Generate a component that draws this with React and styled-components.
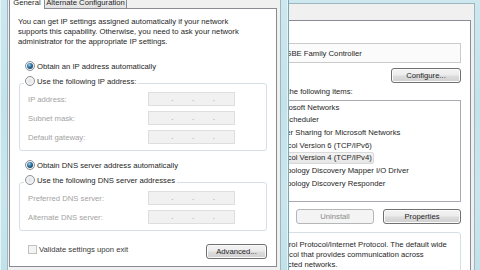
import React from "react";
import styled, { createGlobalStyle } from "styled-components";

const GlobalStyle = createGlobalStyle`
  html, body {
    margin: 0;
    padding: 0;
  }
  body {
    width: 480px;
    height: 270px;
    overflow: hidden;
    background: #c7e5ec;
    font-family: "Liberation Sans", Arial, sans-serif;
    font-size: 7.7px;
    color: #262626;
  }
`;

const Desktop = styled.div`
  position: relative;
  width: 480px;
  height: 270px;
  overflow: hidden;
`;

const Window = styled.div`
  position: absolute;
  left: ${p => p.$left}px;
  top: ${p => p.$top}px;
  width: 290px;
  height: 310px;
  z-index: ${p => p.$z};
  box-sizing: border-box;
  display: flex;
  padding: ${p => p.$frameTop}px 7px 7px;
  border: 1px solid #7fa5b0;
  background: linear-gradient(180deg, #cfe9f0 0%, #c2e2ea 40%, #c9e6ed 70%, #bfe0e8 100%);
  box-shadow: inset 0 0 0 1px #e3f3f7;
`;

const Client = styled.div`
  flex: 1;
  min-width: 0;
  display: flex;
  flex-direction: column;
  background: #f0f0f0;
  border: 1px solid #9fb6be;
  padding: ${p => p.$pad};
`;

const TabRow = styled.div`
  display: flex;
  align-items: flex-end;
  height: ${p => p.$h}px;
  margin-bottom: -1px;
  position: relative;
  z-index: 1;
`;

const Tab = styled.div`
  box-sizing: border-box;
  width: ${p => p.$w}px;
  height: ${p => (p.$active ? 15 : 13)}px;
  margin-left: ${p => (p.$first ? 0 : -1)}px;
  display: flex;
  align-items: center;
  justify-content: center;
  white-space: nowrap;
  border: 1px solid #898c95;
  border-bottom: ${p => (p.$active ? "none" : "1px solid #898c95")};
  border-radius: 2px 2px 0 0;
  background: ${p => (p.$active ? "#fff" : "linear-gradient(180deg, #f3f3f3, #e2e2e2)")};
  position: relative;
  z-index: ${p => (p.$active ? 2 : 1)};
`;

const TabPage = styled.div`
  box-sizing: border-box;
  height: ${p => p.$h}px;
  background: #fff;
  border: 1px solid #898c95;
  padding: ${p => p.$pad};
  display: flex;
  flex-direction: column;
`;

const Intro = styled.p`
  margin: 0;
  line-height: 10px;
  white-space: nowrap;
`;

const RadioRow = styled.label`
  display: flex;
  align-items: center;
  gap: 2px;
  height: 12px;
  margin-left: 7px;
  margin-top: ${p => p.$mt}px;
  white-space: nowrap;
`;

const Radio = styled.span`
  box-sizing: border-box;
  width: 10px;
  height: 10px;
  flex: none;
  border-radius: 50%;
  border: 1px solid #8b9095;
  background: radial-gradient(circle at 50% 50%, #e2e4e6 0%, #f5f6f7 75%);
  display: flex;
  align-items: center;
  justify-content: center;

  &::after {
    content: "";
    display: ${p => (p.$checked ? "block" : "none")};
    width: 6px;
    height: 6px;
    border-radius: 50%;
    background: radial-gradient(circle at 38% 32%, #9cd0ee 0%, #2b6d99 45%, #0e2f4a 100%);
  }
`;

const GroupBox = styled.div`
  display: flex;
  flex-direction: column;
  margin-top: ${p => p.$mt}px;
  margin-left: ${p => p.$ml || 0}px;
  border: 1px solid #d5dfe5;
  border-radius: 3px;
  padding: 0 8px ${p => p.$pb}px ${p => p.$pl || 8}px;
`;

const GroupHeader = styled.div`
  align-self: flex-start;
  display: flex;
  align-items: center;
  gap: 2px;
  height: ${p => p.$h || 12}px;
  margin: ${p => p.$margin};
  padding: 0 2px 0 1px;
  background: #fff;
  white-space: nowrap;
`;

const FieldRow = styled.div`
  display: flex;
  align-items: center;
  height: 14px;

  & + & {
    margin-top: 5px;
  }
`;

const FieldLabel = styled.span`
  width: 120px;
  color: #a2a2a2;
  white-space: nowrap;
`;

const IpBox = styled.div`
  box-sizing: border-box;
  width: 87px;
  height: 14px;
  display: flex;
  align-items: center;
  padding-left: 3px;
  border: 1px solid #dedede;
  background: #f1f1f1;
  color: #8c8c8c;
`;

const Octet = styled.span`
  width: 20px;
`;

const Dot = styled.span`
  width: 1px;
  display: flex;
  justify-content: center;
  line-height: 10px;
`;

const BottomRow = styled.div`
  display: flex;
  justify-content: space-between;
  align-items: flex-start;
  height: 15px;
  margin-top: 13px;
`;

const CheckLabel = styled.label`
  display: flex;
  align-items: center;
  gap: 2px;
  height: 10px;
  margin-left: 10px;
  white-space: nowrap;
  color: #3a3a3a;
`;

const CheckBox = styled.span`
  box-sizing: border-box;
  width: 9px;
  height: 9px;
  flex: none;
  border: 1px solid ${p => (p.$disabled ? "#c2c2c2" : "#8f8f8f")};
  background: ${p => (p.$disabled ? "#f4f4f4" : "linear-gradient(135deg, #dcdcdc, #fbfbfb)")};
  color: #2a4b8d;
  font-size: 7px;
  line-height: 7px;
  text-align: center;
`;

const Button = styled.button`
  box-sizing: border-box;
  width: ${p => p.$w}px;
  height: 15px;
  padding: 0;
  flex: none;
  font: inherit;
  color: ${p => (p.disabled ? "#8a8a8a" : "#262626")};
  border: 1px solid ${p => (p.disabled ? "#b3b7ba" : "#707070")};
  border-radius: 3px;
  background: ${p =>
    p.disabled
      ? "#f4f4f4"
      : "linear-gradient(180deg, #f3f3f3 0%, #ececec 48%, #dddddd 52%, #d0d0d0 100%)"};
  box-shadow: inset 0 0 0 1px ${p => (p.disabled ? "#f4f4f4" : "#fbfbfb")};
`;

const Label = styled.div`
  line-height: 10px;
  white-space: nowrap;
  margin-top: ${p => p.$mt || 0}px;
`;

const AdapterBox = styled.div`
  box-sizing: border-box;
  height: 20px;
  margin-top: 6px;
  display: flex;
  align-items: center;
  gap: 9px;
  padding-left: 4px;
  border: 1px solid #cbcbcb;
  background: #fbfbfb;
  white-space: nowrap;
`;

const RightAligned = styled.div`
  display: flex;
  justify-content: flex-end;
  margin-top: ${p => p.$mt}px;
  gap: 9px;
`;

const ListBox = styled.div`
  box-sizing: border-box;
  height: 102px;
  margin-top: 3px;
  border: 1px solid #a9abb0;
  background: #fff;
`;

const Item = styled.div`
  height: 12.67px;
  display: flex;
  align-items: center;
  gap: 3px;
  white-space: nowrap;
`;

const ItemText = styled.span`
  line-height: 10px;
  padding: 0 1px;
  margin-left: -1px;
  border: 1px solid ${p => (p.$selected ? "#d9d9d9" : "transparent")};
  border-radius: 2px;
  background: ${p => (p.$selected ? "linear-gradient(180deg, #f4f4f4, #e6e6e6)" : "transparent")};
`;

const Description = styled.p`
  margin: 0;
  line-height: 10px;
  white-space: nowrap;
`;

const NetIcon = () => (
  <svg width="11" height="11" viewBox="0 0 11 11">
    <rect x="1" y="2" width="9" height="6" fill="#6d9bc9" stroke="#2f5a86" strokeWidth="0.8" />
    <rect x="4" y="8" width="3" height="2" fill="#7a7a7a" />
  </svg>
);

const IpField = () => (
  <IpBox>
    <Octet />
    <Dot>.</Dot>
    <Octet />
    <Dot>.</Dot>
    <Octet />
    <Dot>.</Dot>
    <Octet />
  </IpBox>
);

const items = [
  "Client for Microsoft Networks",
  "QoS Packet Scheduler",
  "File and Printer Sharing for Microsoft Networks",
  "Internet Protocol Version 6 (TCP/IPv6)",
  "Internet Protocol Version 4 (TCP/IPv4)",
  "Link-Layer Topology Discovery Mapper I/O Driver",
  "Link-Layer Topology Discovery Responder"
];

const AdapterProperties = () => (
  <Window $left={193} $top={-20} $z={1} $frameTop={22}>
    <Client $pad="0 3px 0 4px">
      <TabRow $h={18}>
        <Tab $first $active $w={46}>Networking</Tab>
        <Tab $w={34}>Sharing</Tab>
      </TabRow>
      <TabPage $h={270} $pad="6px 9px 0 6px">
        <Label>Connect using:</Label>
        <AdapterBox>
          <NetIcon />
          <span>Realtek PCIe GBE Family Controller</span>
        </AdapterBox>
        <RightAligned $mt={5}>
          <Button $w={70}>Configure...</Button>
        </RightAligned>
        <Label $mt={4}>This connection uses the following items:</Label>
        <ListBox>
          {items.map((name, i) => (
            <Item key={name}>
              <CheckBox>✓</CheckBox>
              <NetIcon />
              <ItemText $selected={i === 4}>{name}</ItemText>
            </Item>
          ))}
        </ListBox>
        <RightAligned $mt={7}>
          <Button $w={78}>Install...</Button>
          <Button $w={78} disabled>Uninstall</Button>
          <Button $w={78}>Properties</Button>
        </RightAligned>
        <GroupBox $mt={8} $pb={8} $pl={11}>
          <GroupHeader $h={10} $margin="-6px 0 3px -6px">Description</GroupHeader>
          <Description>
            Transmission Control Protocol/Internet Protocol. The default wide
            <br />
            area network protocol that provides communication across
            <br />
            diverse interconnected networks.
          </Description>
        </GroupBox>
      </TabPage>
    </Client>
  </Window>
);

const Ipv4Properties = () => (
  <Window $left={-1} $top={-22} $z={2} $frameTop={7}>
    <Client $pad="7px 3px 0 1px">
      <TabRow $h={15}>
        <Tab $first $active $w={36}>General</Tab>
        <Tab $w={83}>Alternate Configuration</Tab>
      </TabRow>
      <TabPage $h={259} $pad="8px 9px 0 8px">
        <Intro>
          You can get IP settings assigned automatically if your network
          <br />
          supports this capability. Otherwise, you need to ask your network
          <br />
          administrator for the appropriate IP settings.
        </Intro>

        <RadioRow $mt={13}>
          <Radio $checked />
          Obtain an IP address automatically
        </RadioRow>

        <GroupBox $mt={11} $ml={1} $pb={6}>
          <GroupHeader $margin="-9px 0 5px -4px">
            <Radio />
            Use the following IP address:
          </GroupHeader>
          <FieldRow>
            <FieldLabel>IP address:</FieldLabel>
            <IpField />
          </FieldRow>
          <FieldRow>
            <FieldLabel>Subnet mask:</FieldLabel>
            <IpField />
          </FieldRow>
          <FieldRow>
            <FieldLabel>Default gateway:</FieldLabel>
            <IpField />
          </FieldRow>
        </GroupBox>

        <RadioRow $mt={8}>
          <Radio $checked />
          Obtain DNS server address automatically
        </RadioRow>

        <GroupBox $mt={11} $ml={1} $pb={6}>
          <GroupHeader $margin="-9px 0 5px -4px">
            <Radio />
            Use the following DNS server addresses
          </GroupHeader>
          <FieldRow>
            <FieldLabel>Preferred DNS server:</FieldLabel>
            <IpField />
          </FieldRow>
          <FieldRow>
            <FieldLabel>Alternate DNS server:</FieldLabel>
            <IpField />
          </FieldRow>
        </GroupBox>

        <BottomRow>
          <CheckLabel>
            <CheckBox $disabled />
            Validate settings upon exit
          </CheckLabel>
          <Button $w={61}>Advanced...</Button>
        </BottomRow>
      </TabPage>
    </Client>
  </Window>
);

export default function App() {
  return (
    <Desktop>
      <GlobalStyle />
      <AdapterProperties />
      <Ipv4Properties />
    </Desktop>
  );
}
